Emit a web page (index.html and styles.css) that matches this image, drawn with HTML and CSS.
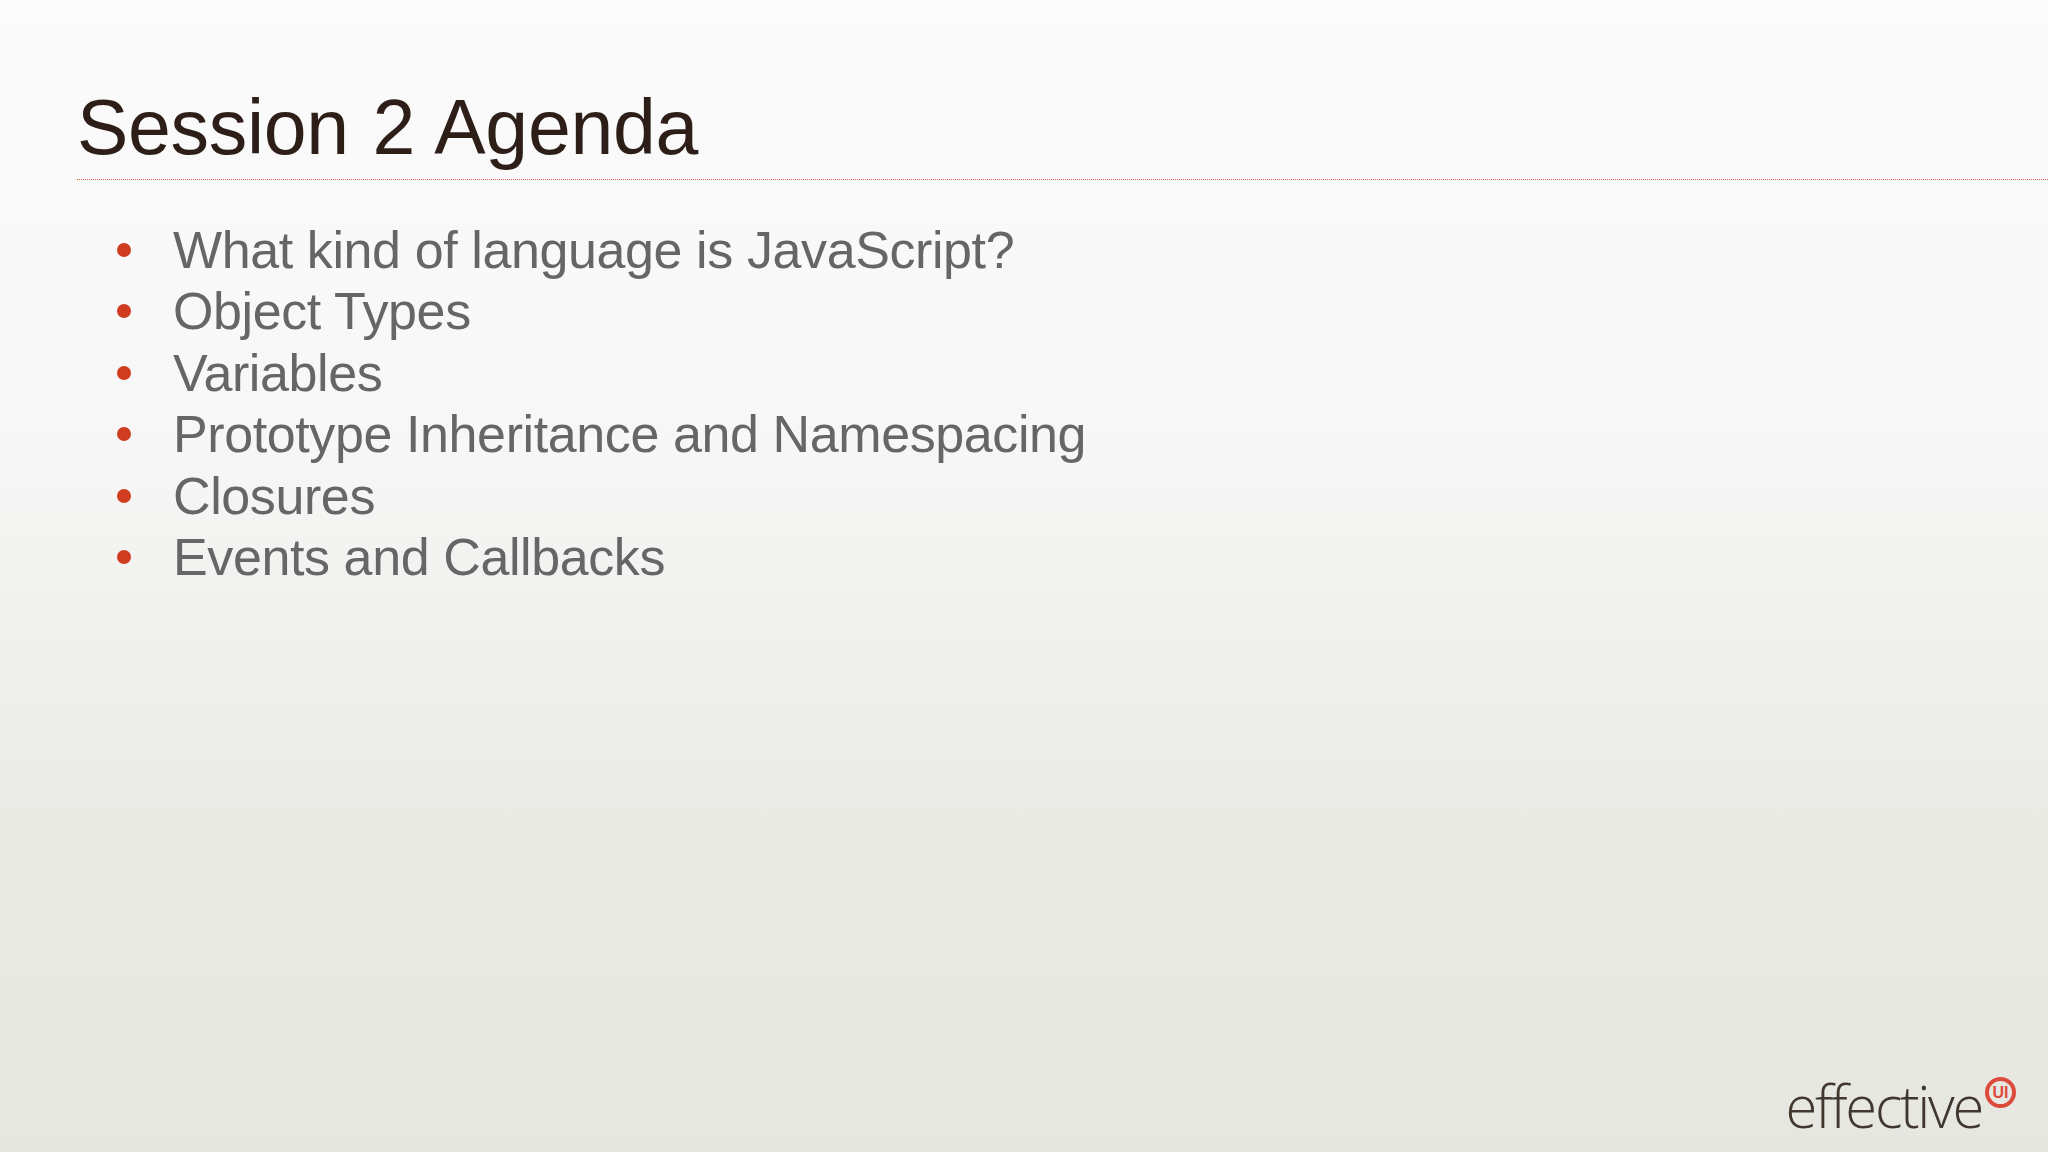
FILE: index.html
```html
<!DOCTYPE html>
<html lang="en">
<head>
<meta charset="utf-8">
<title>Session 2 Agenda</title>
<link rel="stylesheet" href="styles.css">
</head>
<body>
<main class="slide">
  <header class="head">
    <h1 class="title">Session 2 Agenda</h1>
  </header>
  <ul class="agenda">
    <li class="item">What kind of language is JavaScript?</li>
    <li class="item">Object Types</li>
    <li class="item">Variables</li>
    <li class="item">Prototype Inheritance and Namespacing</li>
    <li class="item">Closures</li>
    <li class="item">Events and Callbacks</li>
  </ul>
  <footer class="foot">
    <div class="logo">
      <span class="logo-word">effective</span>
      <span class="logo-badge">UI</span>
    </div>
  </footer>
</main>
</body>
</html>
```

FILE: styles.css
```css
* { box-sizing: border-box; }
html, body { margin: 0; height: 100%; }
body { overflow: hidden; }
.slide {
  width: 2048px;
  height: 1152px;
  display: flex;
  flex-direction: column;
  font-family: "Liberation Sans", Arial, sans-serif;
  background: linear-gradient(180deg, #fbfbfb 0%, #f8f7f7 38%, #efefec 57%, #ebebe6 70%, #e7e7e2 100%);
}
.head {
  margin-left: 77px;
  height: 180px;
  padding-top: 82px;
  border-bottom: 1px dotted #e2603f;
}
.title {
  margin: 0;
  font-size: 77px;
  line-height: 90px;
  font-weight: 400;
  letter-spacing: -0.3px;
  word-spacing: 2.5px;
  color: #2d1f18;
}
.agenda {
  list-style: none;
  margin: 40px 0 0;
  padding: 0 0 0 173px;
  flex: 1;
}
.item {
  position: relative;
  font-size: 52px;
  line-height: 61.4px;
  letter-spacing: -0.4px;
  color: #666667;
}
.item::before {
  content: "";
  position: absolute;
  left: -56px;
  top: 23px;
  width: 14px;
  height: 14px;
  border-radius: 50%;
  background: #d03c20;
}
.foot {
  display: flex;
  justify-content: flex-end;
  padding: 0 32px 16px 0;
}
.logo {
  display: flex;
  align-items: flex-start;
  gap: 3px;
}
.logo-word {
  font-family: "Open Sans", sans-serif;
  font-weight: 300;
  font-size: 58px;
  line-height: 60px;
  letter-spacing: -2.3px;
  color: #40372f;
  margin-top: 15px;
}
.logo-badge {
  width: 31px;
  height: 31px;
  margin-top: 16px;
  border: 4px solid #dc4a3c;
  border-radius: 50%;
  font-size: 16px;
  font-weight: 700;
  line-height: 23px;
  text-align: center;
  color: #dc4a3c;
}
```
